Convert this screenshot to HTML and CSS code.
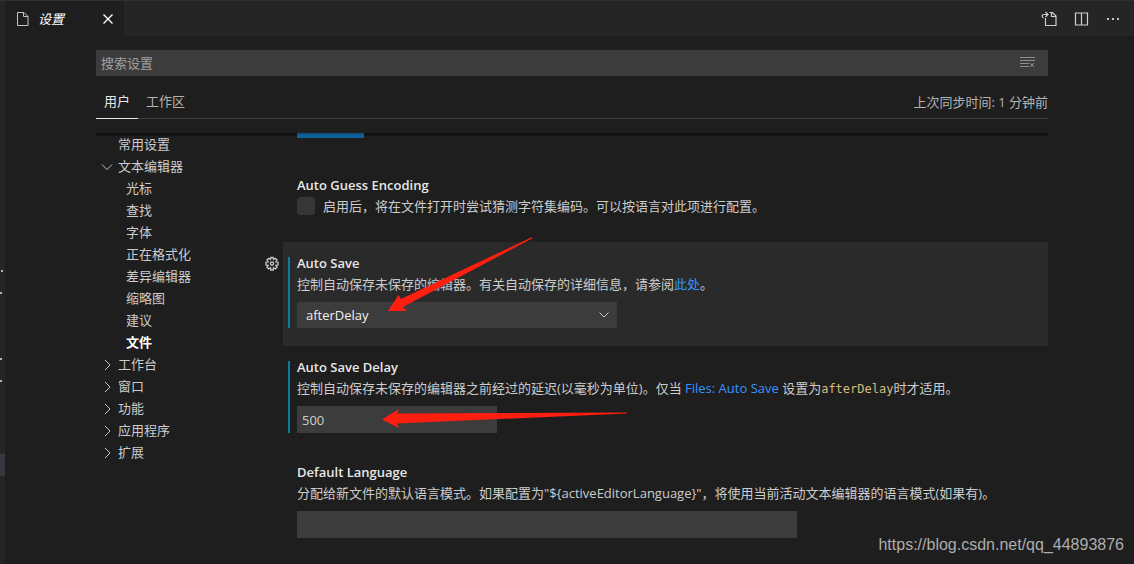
FILE: index.html
```html
<!DOCTYPE html>
<html lang="zh-CN">
<head>
<meta charset="utf-8">
<title>设置</title>
<link rel="stylesheet" href="styles.css">
</head>
<body>
<div class="window">
  <aside class="sidebar-edge">
    <i class="speck speck-a"></i><i class="speck speck-b"></i><i class="speck speck-c"></i><i class="speck speck-d"></i><i class="selected-row"></i>
  </aside>
  <main class="editor">
    <header class="tab-bar">
      <div class="tab">
        <svg class="icon" width="16" height="16" viewBox="0 0 16 16"><path d="M2.500 1.500h6.500l4 4v9h-10.500zM8.500 1.500v4h4.500"/></svg>
        <span class="tab-name">设置</span>
        <button class="icon-button close" aria-label="关闭"><svg class="icon close-icon" width="16" height="16" viewBox="0 0 16 16"><path d="M3.500 3.500l9 9M12.500 3.500l-9 9"/></svg></button>
      </div>
      <div class="actions">
        <button class="icon-button" aria-label="打开设置 (json)"><svg class="icon action-icon" width="16" height="16" viewBox="0 0 16 16"><path d="M8.500 1.500h3l3.500 3.500v9.500H4.500V7M10.500 1.500v4H15M2.500 7C.5 6 .5 3.500 3 3.500h3.500M4.500 1L7 3.500 4.500 6"/></svg></button>
        <button class="icon-button" aria-label="拆分编辑器"><svg class="icon action-icon" width="16" height="16" viewBox="0 0 16 16"><path d="M2.500 2h12v12h-12zM8.500 2v12"/></svg></button>
        <button class="icon-button" aria-label="更多操作"><svg class="dots" width="16" height="16" viewBox="0 0 16 16"><path d="M2 7h2v2H2zM7 7h2v2H7zM12 7h2v2h-2z"/></svg></button>
      </div>
    </header>
    <div class="settings">
      <div class="search">
        <input class="search-input" type="text" placeholder="搜索设置" aria-label="搜索设置">
        <button class="icon-button clear" aria-label="清除"><svg class="icon" width="16" height="16" viewBox="0 0 16 16"><path d="M0 2.500h15M0 5.500h15M0 8.500h9M0 11.500h9M10 8l4 4M14 8l-4 4"/></svg></button>
      </div>
      <nav class="scope">
        <button class="scope-tab active">用户</button>
        <button class="scope-tab">工作区</button>
        <span class="sync">上次同步时间: 1 分钟前</span>
      </nav>
      <div class="body">
        <ul class="toc">
          <li class="top">常用设置</li>
          <li class="top"><svg class="icon arrow" width="16" height="16" viewBox="0 0 16 16"><path d="M3 5.500l5 5 5-5"/></svg>文本编辑器</li>
          <li>光标</li>
          <li>查找</li>
          <li>字体</li>
          <li>正在格式化</li>
          <li>差异编辑器</li>
          <li>缩略图</li>
          <li>建议</li>
          <li class="current">文件</li>
          <li class="top"><svg class="icon arrow" width="16" height="16" viewBox="0 0 16 16"><path d="M6 3l5 5-5 5"/></svg>工作台</li>
          <li class="top"><svg class="icon arrow" width="16" height="16" viewBox="0 0 16 16"><path d="M6 3l5 5-5 5"/></svg>窗口</li>
          <li class="top"><svg class="icon arrow" width="16" height="16" viewBox="0 0 16 16"><path d="M6 3l5 5-5 5"/></svg>功能</li>
          <li class="top"><svg class="icon arrow" width="16" height="16" viewBox="0 0 16 16"><path d="M6 3l5 5-5 5"/></svg>应用程序</li>
          <li class="top"><svg class="icon arrow" width="16" height="16" viewBox="0 0 16 16"><path d="M6 3l5 5-5 5"/></svg>扩展</li>
        </ul>
        <div class="list">
          <div class="previous"><span class="primary-edge"></span></div>
          <section class="item">
            <h3>Auto Guess Encoding</h3>
            <label class="check"><input class="checkbox" type="checkbox">启用后，将在文件打开时尝试猜测字符集编码。可以按语言对此项进行配置。</label>
          </section>
          <section class="item focused modified">
            <button class="icon-button gear" aria-label="更多操作"><svg class="icon gear-icon" width="16" height="16" viewBox="0 0 16 16"><path d="M6.900 1.500h2.200l.4 1.900 1.900-1.100 1.600 1.600-1.100 1.900 2.100.5v2.600l-2.100.5 1.100 1.900-1.600 1.600-1.900-1.100-.4 2.200H6.900l-.4-2.200-1.900 1.100L3 11.300l1.100-1.900L2 8.900V6.300l2.100-.5L3 3.900l1.600-1.600 1.900 1.100z"/><circle cx="8" cy="7.600" r="1.600"/></svg></button>
            <h3>Auto Save</h3>
            <p>控制自动保存未保存的编辑器。有关自动保存的详细信息，请参阅<a href="#">此处</a>。</p>
            <div class="select-box">
              <select class="select" aria-label="Auto Save"><option>afterDelay</option></select>
              <svg class="icon chevron" width="16" height="16" viewBox="0 0 16 16"><path d="M3.500 5.500L8 10l4.500-4.500"/></svg>
            </div>
            <svg class="pointer pointer-save" width="146" height="76" viewBox="0 0 146 76"><path d="M145 1l-2-.5L13 62l-2.500-4L0 74h19l-4-4z"/></svg>
          </section>
          <section class="item modified">
            <h3>Auto Save Delay</h3>
            <p>控制自动保存未保存的编辑器之前经过的延迟(以毫秒为单位)。仅当 <a href="#">Files: Auto Save</a> 设置为<code>afterDelay</code>时才适用。</p>
            <input class="field short" type="text" value="500" aria-label="Auto Save Delay">
            <svg class="pointer pointer-delay" width="246" height="20" viewBox="0 0 246 20"><path d="M0 10.500L17 0l-2 4.500L245 3.500v1L15 14.500l2 4.500z"/></svg>
          </section>
          <section class="item">
            <h3>Default Language</h3>
            <p>分配给新文件的默认语言模式。如果配置为"${activeEditorLanguage}"，将使用当前活动文本编辑器的语言模式(如果有)。</p>
            <input class="field" type="text" aria-label="Default Language">
          </section>
        </div>
      </div>
    </div>
  </main>
  <span class="watermark">https://blog.csdn.net/qq_44893876</span>
</div>
</body>
</html>
```
FILE: styles.css
```css
* { box-sizing: border-box; }
body { margin: 0; background: #1e1e1e; color: #cccccc; font: 13px/22px "Open Sans", "Noto Sans CJK SC", sans-serif; }
button, input, select { font: inherit; color: inherit; border: 0; border-radius: 0; margin: 0; padding: 0; background: none; outline: 0; }
h3, p, ul { margin: 0; padding: 0; }
a { color: #3794ff; text-decoration: none; }
.window { position: relative; display: flex; min-height: 100vh; overflow: hidden; border-top: 1px solid #303031; }
.sidebar-edge { position: relative; width: 5px; flex: none; background: #252526; }
.selected-row { position: absolute; left: 0; top: 453px; width: 5px; height: 22px; background: #37373d; }
.speck { position: absolute; left: 0; width: 2px; height: 2px; background: #b4b4b4; }
.speck-a { top: 269px; left: 1px; }
.speck-b { top: 291px; }
.speck-c { top: 357px; }
.speck-d { top: 379px; }
.editor { flex: 1; min-width: 0; }
.icon { display: block; fill: none; stroke: #c5c5c5; stroke-width: 1; flex: none; }
.icon-button { display: block; cursor: pointer; }
.tab-bar { display: flex; justify-content: space-between; height: 35px; background: #252526; }
.tab { display: flex; align-items: center; width: 119px; padding-left: 10px; background: #1e1e1e; color: #fff; }
.tab-name { flex: 1; padding-left: 7px; font-style: italic; }
.close { margin-right: 8px; }
.close-icon { stroke: #fff; stroke-width: 1.4; }
.action-icon { stroke: #d0d0d0; stroke-width: 1.2; }
.gear-icon { stroke-width: 1.4; }
.actions { display: flex; align-items: center; gap: 16px; padding-right: 13px; }
.dots { display: block; fill: #c5c5c5; }
.settings { padding: 14px 86px 0 91px; }
.search { display: flex; align-items: center; height: 26px; padding-right: 12px; background: #3c3c3c; }
.search-input { flex: 1; min-width: 0; height: 26px; padding-left: 5px; }
.search-input::placeholder { color: #a0a0a0; opacity: 1; }
.clear { opacity: 0.6; }
.scope { display: flex; margin-top: 10px; height: 33px; border-bottom: 1px solid #404040; color: #b4b4b4; }
.scope-tab { height: 33px; padding: 0 8px 2px; border-bottom: 1px solid transparent; }
.scope-tab.active { color: #e7e7e7; border-bottom-color: #e7e7e7; }
.sync { margin-left: auto; line-height: 32px; }
.body { position: relative; display: flex; margin-top: 14px; }
.body::before { content: ""; position: absolute; top: 0; left: 0; right: 0; height: 3px; background: linear-gradient(#0d0d0d, #0d0d0d66); }
.toc { width: 187px; flex: none; list-style: none; }
.toc li { position: relative; height: 22px; padding-left: 30px; white-space: nowrap; }
.toc .top { padding-left: 22px; }
.toc .current { color: #fff; font-weight: bold; }
.arrow { position: absolute; left: 3px; top: 4px; }
.list { flex: 1; min-width: 0; }
.previous { height: 31px; padding-left: 14px; }
.primary-edge { position: relative; display: block; width: 67px; height: 5px; background: linear-gradient(#0c4f7c, #0e639c 60%); }
.item { position: relative; padding: 10px 14px 18px; white-space: nowrap; }
.item h3 { line-height: 22px; font-size: 13px; font-weight: 600; color: #e7e7e7; }
.item p { line-height: 20px; height: 20px; margin-bottom: 8px; }
.focused { background: #2a2a2b; }
.modified::before { content: ""; position: absolute; left: 5px; top: 15px; bottom: 18px; width: 2px; background: #0c7d9d; }
.check { display: flex; align-items: center; gap: 8px; height: 20px; margin-bottom: 8px; }
.checkbox { appearance: none; width: 18px; height: 18px; border: 1px solid #3c3c3c; border-radius: 3px; background: #3c3c3c; opacity: 0.8; }
.gear { position: absolute; left: -19px; top: 14px; }
.select-box { position: relative; width: 320px; }
.select { display: block; appearance: none; width: 100%; height: 26px; padding-left: 9px; background: #3c3c3c; color: #f0f0f0; }
.chevron { position: absolute; right: 5px; top: 5px; pointer-events: none; }
.field { display: block; width: 500px; height: 27px; padding-left: 5px; background: #3c3c3c; }
.short { width: 200px; }
code { font: 12px/18px "DejaVu Sans Mono", monospace; color: #d7ba7d; }
.pointer { position: absolute; fill: #ff1e10; z-index: 3; pointer-events: none; }
.pointer-save { left: 105px; top: -5px; }
.pointer-delay { left: 99px; top: 63px; }
.watermark { position: absolute; right: 10px; bottom: 7px; font: 16px/24px "Liberation Sans", Arial, sans-serif; color: #adadad; }
```
